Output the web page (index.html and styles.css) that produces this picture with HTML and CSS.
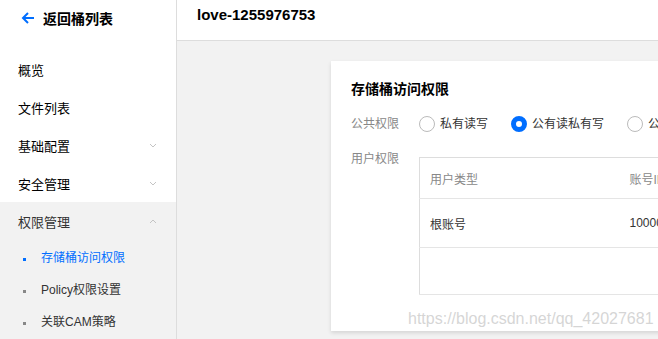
FILE: index.html
```html
<!DOCTYPE html>
<html lang="zh-CN">
<head>
    <meta charset="UTF-8">
    <meta name="viewport" content="width=device-width, initial-scale=1.0">
    <title>存储桶访问权限</title>
    <link rel="stylesheet" href="styles.css">
</head>
<body>

    <div class="layout">

        <aside class="sidebar">
            <div class="back">
                <svg class="back-icon" width="14" height="14" viewBox="0 0 14 14">
                    <path d="M13 7 H2 M7 2 L2 7 L7 12" fill="none" stroke="#006eff" stroke-width="2"/>
                </svg>
                <span>返回桶列表</span>
            </div>

            <ul class="menu">
                <li class="menu-item">概览</li>
                <li class="menu-item">文件列表</li>
                <li class="menu-item">基础配置
                    <svg class="chev" width="8" height="5" viewBox="0 0 8 5"><path d="M1 1 L4 4 L7 1" fill="none" stroke="#c4c4c4"/></svg>
                </li>
                <li class="menu-item">安全管理
                    <svg class="chev" width="8" height="5" viewBox="0 0 8 5"><path d="M1 1 L4 4 L7 1" fill="none" stroke="#c4c4c4"/></svg>
                </li>
                <li class="menu-group">
                    <div class="menu-item">权限管理
                        <svg class="chev" width="8" height="5" viewBox="0 0 8 5"><path d="M1 4 L4 1 L7 4" fill="none" stroke="#c4c4c4"/></svg>
                    </div>
                    <ul class="submenu">
                        <li class="sub-item active">存储桶访问权限</li>
                        <li class="sub-item">Policy权限设置</li>
                        <li class="sub-item">关联CAM策略</li>
                    </ul>
                </li>
            </ul>
        </aside>

        <main class="main">
            <header class="topbar">love-1255976753</header>

            <div class="content">
                <section class="card">
                    <h2 class="card-title">存储桶访问权限</h2>

                    <div class="field">
                        <div class="field-label">公共权限</div>
                        <div class="radios">
                            <label class="radio"><span class="dot"></span>私有读写</label>
                            <label class="radio checked"><span class="dot"></span>公有读私有写</label>
                            <label class="radio"><span class="dot"></span>公有读写</label>
                        </div>
                    </div>

                    <div class="field field-top">
                        <div class="field-label">用户权限</div>
                        <table class="perm-table">
                            <thead>
                                <tr><th class="col-type">用户类型</th><th>账号ID</th></tr>
                            </thead>
                            <tbody>
                                <tr><td class="col-type">根账号</td><td>100000000001</td></tr>
                                <tr class="empty"><td></td><td></td></tr>
                            </tbody>
                        </table>
                    </div>
                </section>
            </div>
        </main>
    </div>

    <div class="watermark">https://blog.csdn.net/qq_42027681</div>

</body>
</html>
```

FILE: styles.css
```css
*{
    box-sizing: border-box;
}

body{
    margin: 0;
    width: 658px;
    height: 339px;
    overflow: hidden;
    font-family: "Liberation Sans", "Noto Sans CJK SC", sans-serif;
    font-size: 12px;
    color: #000;
    background-color: #f2f2f2;
    position: relative;
}

ul{
    list-style: none;
    margin: 0;
    padding: 0;
}

.layout{
    display: flex;
    height: 339px;
}

/* sidebar */

.sidebar{
    width: 177px;
    flex-shrink: 0;
    background-color: #fff;
    border-right: 1px solid #dddddd;
    display: flex;
    flex-direction: column;
}

.back{
    display: flex;
    align-items: center;
    height: 36px;
    padding-left: 21px;
    font-size: 14px;
    font-weight: bold;
}

.back-icon{
    margin-right: 8px;
}

.menu{
    margin-top: 14px;
    flex: 1;
    display: flex;
    flex-direction: column;
}

.menu-item{
    height: 38px;
    display: flex;
    align-items: center;
    justify-content: space-between;
    padding: 0 19px 0 18px;
    font-size: 13px;
}

.menu-group{
    flex: 1;
    background-color: #f2f2f2;
}

.menu-group .menu-item{
    color: #333;
}

.sub-item{
    height: 32px;
    display: flex;
    align-items: center;
    padding-left: 41px;
    position: relative;
    color: #333;
}

.sub-item::before{
    content: "";
    position: absolute;
    left: 23px;
    top: 18px;
    width: 3px;
    height: 3px;
    background-color: #888;
}

.sub-item.active{
    color: #006eff;
}

.sub-item.active::before{
    background-color: #006eff;
}

/* main */

.main{
    flex: 1;
    display: flex;
    flex-direction: column;
    min-width: 0;
}

.topbar{
    height: 41px;
    flex-shrink: 0;
    background-color: #fff;
    border-bottom: 1px solid #dddddd;
    padding: 7px 0 0 20px;
    font-size: 15px;
    font-weight: bold;
    line-height: 16px;
}

.content{
    flex: 1;
    padding: 20px 0 0 154px;
    overflow: hidden;
}

.card{
    width: 560px;
    height: 270px;
    background-color: #fff;
    box-shadow: 0 2px 4px rgba(0, 0, 0, 0.12);
    padding: 18px 20px 0 20px;
}

.card-title{
    margin: 0 0 15px 0;
    font-size: 14px;
    font-weight: bold;
    line-height: 20px;
}

.field{
    display: flex;
    align-items: center;
    margin-bottom: 15px;
}

.field-top{
    align-items: flex-start;
}

.field-label{
    width: 68px;
    flex-shrink: 0;
    color: #888;
    line-height: 20px;
}

.radios{
    display: flex;
    gap: 23px;
}

.radio{
    display: flex;
    align-items: center;
    color: #333;
    line-height: 20px;
}

.dot{
    width: 16px;
    height: 16px;
    border: 1px solid #bbb;
    border-radius: 50%;
    margin-right: 5px;
}

.radio.checked .dot{
    border: 5px solid #006eff;
}

.perm-table{
    width: 320px;
    border-collapse: collapse;
    border: 1px solid #dddddd;
    color: #333;
    margin-top: 8px;
}

.perm-table th{
    height: 41px;
    text-align: left;
    font-weight: normal;
    color: #888;
    padding: 0 0 0 10px;
    border-bottom: 1px solid #e5e5e5;
}

.perm-table td{
    height: 49px;
    padding: 0 0 0 10px;
    border-bottom: 1px solid #e5e5e5;
}

.perm-table .col-type{
    width: 200px;
}

.perm-table .empty td{
    height: 47px;
}

.watermark{
    position: absolute;
    left: 408px;
    top: 310px;
    font-size: 16px;
    color: rgba(200, 200, 200, 0.75);
    white-space: nowrap;
}
```
